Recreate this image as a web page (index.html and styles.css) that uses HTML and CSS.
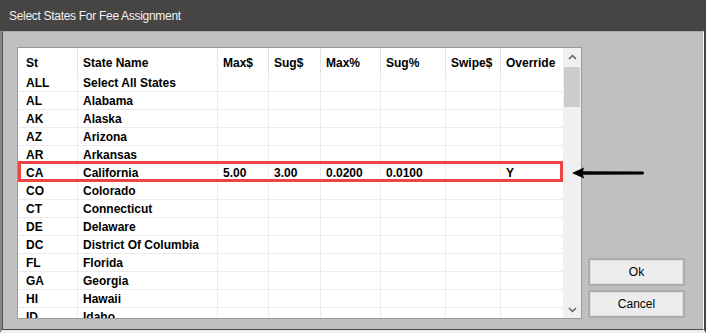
FILE: index.html
```html
<!DOCTYPE html>
<html>
<head>
<meta charset="utf-8">
<link rel="stylesheet" href="styles.css">
</head>
<body>
<div class="window">
  <div class="titlebar">Select States For Fee Assignment</div>
  <div class="frame">
    <div class="content">
      <div class="grid">
        <div class="table">
          <div class="row head"><div class="c first">St</div><div class="c">State Name</div><div class="c">Max$</div><div class="c">Sug$</div><div class="c">Max%</div><div class="c">Sug%</div><div class="c">Swipe$</div><div class="c last">Override</div></div>
          <div class="row"><div class="c first">ALL</div><div class="c">Select All States</div><div class="c"></div><div class="c"></div><div class="c"></div><div class="c"></div><div class="c"></div><div class="c last"></div></div>
          <div class="row"><div class="c first">AL</div><div class="c">Alabama</div><div class="c"></div><div class="c"></div><div class="c"></div><div class="c"></div><div class="c"></div><div class="c last"></div></div>
          <div class="row"><div class="c first">AK</div><div class="c">Alaska</div><div class="c"></div><div class="c"></div><div class="c"></div><div class="c"></div><div class="c"></div><div class="c last"></div></div>
          <div class="row"><div class="c first">AZ</div><div class="c">Arizona</div><div class="c"></div><div class="c"></div><div class="c"></div><div class="c"></div><div class="c"></div><div class="c last"></div></div>
          <div class="row"><div class="c first">AR</div><div class="c">Arkansas</div><div class="c"></div><div class="c"></div><div class="c"></div><div class="c"></div><div class="c"></div><div class="c last"></div></div>
          <div class="row sel"><div class="c first">CA</div><div class="c">California</div><div class="c">5.00</div><div class="c">3.00</div><div class="c">0.0200</div><div class="c">0.0100</div><div class="c"></div><div class="c last">Y</div></div>
          <div class="row"><div class="c first">CO</div><div class="c">Colorado</div><div class="c"></div><div class="c"></div><div class="c"></div><div class="c"></div><div class="c"></div><div class="c last"></div></div>
          <div class="row"><div class="c first">CT</div><div class="c">Connecticut</div><div class="c"></div><div class="c"></div><div class="c"></div><div class="c"></div><div class="c"></div><div class="c last"></div></div>
          <div class="row"><div class="c first">DE</div><div class="c">Delaware</div><div class="c"></div><div class="c"></div><div class="c"></div><div class="c"></div><div class="c"></div><div class="c last"></div></div>
          <div class="row"><div class="c first">DC</div><div class="c">District Of Columbia</div><div class="c"></div><div class="c"></div><div class="c"></div><div class="c"></div><div class="c"></div><div class="c last"></div></div>
          <div class="row"><div class="c first">FL</div><div class="c">Florida</div><div class="c"></div><div class="c"></div><div class="c"></div><div class="c"></div><div class="c"></div><div class="c last"></div></div>
          <div class="row"><div class="c first">GA</div><div class="c">Georgia</div><div class="c"></div><div class="c"></div><div class="c"></div><div class="c"></div><div class="c"></div><div class="c last"></div></div>
          <div class="row"><div class="c first">HI</div><div class="c">Hawaii</div><div class="c"></div><div class="c"></div><div class="c"></div><div class="c"></div><div class="c"></div><div class="c last"></div></div>
          <div class="row"><div class="c first">ID</div><div class="c">Idaho</div><div class="c"></div><div class="c"></div><div class="c"></div><div class="c"></div><div class="c"></div><div class="c last"></div></div>
        </div>
        <div class="scrollbar">
          <div class="sb-btn"><svg width="9" height="6" viewBox="0 0 9 6"><path d="M1 5 L4.5 1.5 L8 5" fill="none" stroke="#606060" stroke-width="1.5"/></svg></div>
          <div class="thumb"></div>
          <div class="track"></div>
          <div class="sb-btn"><svg width="9" height="6" viewBox="0 0 9 6"><path d="M1 1 L4.5 4.5 L8 1" fill="none" stroke="#606060" stroke-width="1.5"/></svg></div>
        </div>
      </div>
      <div class="buttons">
        <div class="btn">Ok</div>
        <div class="btn">Cancel</div>
      </div>
    </div>
  </div>
  <svg class="arrow" width="76" height="14" viewBox="0 0 76 14">
    <path d="M1 7 L13 1.5 L12 5.2 L72 5.4 Q74 7 72 8.6 L12 8.8 L13 12.5 Z" fill="#000"/>
  </svg>
</div>
</body>
</html>
```
FILE: styles.css
```css
* { box-sizing: border-box; }
html, body { margin: 0; padding: 0; }
body { width: 706px; height: 333px; overflow: hidden; font-family: "Liberation Sans", Arial, sans-serif; }

.window {
  position: relative;
  width: 706px;
  height: 333px;
  display: flex;
  flex-direction: column;
  background: #464543;
}
.titlebar {
  height: 31px;
  flex: none;
  padding: 1px 0 0 9px;
  line-height: 30px;
  font-size: 12px;
  letter-spacing: -0.3px;
  color: #f2f2f2;
  background: #464543;
}
.frame {
  flex: 1;
  display: flex;
  border-left: 2px solid #868686;
  border-right: 2px solid #464543;
  border-bottom: 3px solid #efefef;
}
.content {
  flex: 1;
  display: flex;
  align-items: flex-start;
  padding: 15px 0 0 14px;
  background: #c0c0c0;
  border-top: 1px solid #a9a9a9;
  border-left: 1px solid #505050;
  border-right: 1px solid #fafafa;
  border-bottom: 1px solid #4a4a4a;
}
.grid {
  display: flex;
  width: 565px;
  height: 272px;
  border: 1px solid #9a9a9a;
  background: #fff;
}
.table {
  width: 545px;
  height: 270px;
  overflow: hidden;
}
.row {
  display: grid;
  grid-template-columns: 60px 140px 51px 52px 60px 65px 55px 62px;
  height: 18px;
  border-bottom: 1px solid #ececec;
  font-size: 12px;
  font-weight: bold;
  color: #000;
}
.row .c {
  padding: 1px 0 0 5px;
  line-height: 17px;
  border-right: 1px solid #ececec;
  white-space: nowrap;
  overflow: hidden;
}
.row .c.first { padding-left: 8px; }
.row .c.last { border-right: none; }
.row.head {
  height: 26px;
  border-bottom: none;
}
.row.head .c {
  line-height: 24px;
  padding-top: 3px;
  border-right-color: #e4e4e4;
}
.row.sel { position: relative; }
.row.sel::after {
  content: "";
  position: absolute;
  left: 0;
  right: 0;
  top: -3px;
  bottom: -1px;
  border: 3px solid #ee4444;
}
.scrollbar {
  width: 18px;
  height: 270px;
  display: flex;
  flex-direction: column;
  background: #f0f0f0;
}
.sb-btn {
  height: 17px;
  flex: none;
  display: flex;
  align-items: center;
  justify-content: center;
}
.thumb {
  height: 40px;
  margin: 2px 1px 0 1px;
  background: #cdcdcd;
}
.track { flex: 1; }
.buttons {
  height: 272px;
  margin-left: 6px;
  padding-bottom: 1px;
  display: flex;
  flex-direction: column;
  justify-content: flex-end;
  gap: 4px;
}
.btn {
  width: 97px;
  height: 28px;
  border: 2px solid #acacac;
  box-shadow: inset 0 0 0 1px #dcdcdc;
  background: #ededed;
  font-size: 12px;
  line-height: 24px;
  text-align: center;
  color: #000;
}
.arrow {
  position: absolute;
  left: 571px;
  top: 166px;
}
```
